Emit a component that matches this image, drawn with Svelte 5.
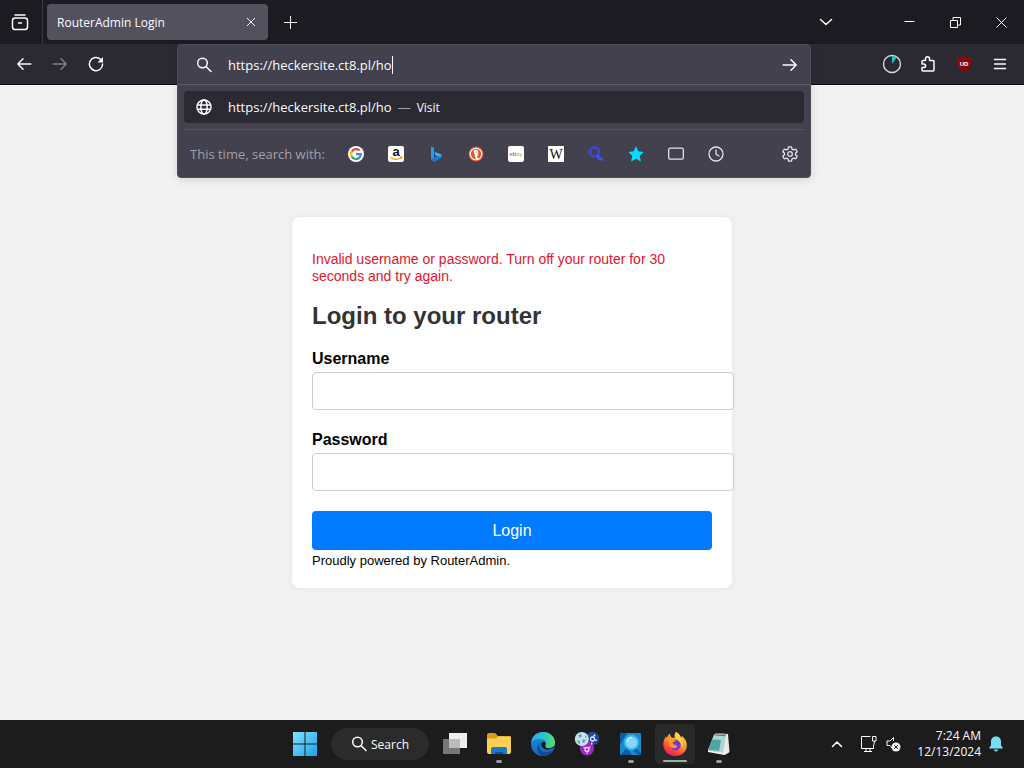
<script>
  let url = $state('https://heckersite.ct8.pl/ho');
  let username = $state('');
  let password = $state('');

  const engines = [
    'Google', 'Amazon', 'Bing', 'DuckDuckGo', 'eBay', 'Wikipedia',
    'Search', 'Bookmarks', 'Tabs', 'History',
  ];

  const apps = [
    { name: 'Task View' },
    { name: 'File Explorer', running: true },
    { name: 'Edge' },
    { name: 'Process Hacker' },
    { name: 'Magnifier', running: true },
    { name: 'Firefox', running: true, active: true },
    { name: 'Notepad', running: true },
  ];
</script>

{#snippet magnifier()}
  <svg class="line" width="16" height="16" viewBox="0 0 16 16" aria-hidden="true">
    <circle cx="6.5" cy="6" r="4.8" />
    <path d="M10.2 9.7 15 14.5" />
  </svg>
{/snippet}

{#snippet arrow()}
  <svg class="line" width="16" height="16" viewBox="0 0 16 16" aria-hidden="true">
    <path d="M1.2 8h13M9 2.8 14.2 8 9 13.2" />
  </svg>
{/snippet}

{#snippet engineIcon(name)}
  <svg width="16" height="16" viewBox="0 0 16 16" aria-hidden="true">
    {#if name === 'Google'}
      <circle cx="8" cy="8" r="8" fill="#fff" />
      <g fill="none" stroke-width="2.2">
        <path d="M3.8 5.6A4.9 4.9 0 0 1 11.6 4.6" stroke="#ea4335" />
        <path d="M3.8 5.4a5 5 0 0 0 0 5.2" stroke="#fbbc05" />
        <path d="M3.7 10.4a4.9 4.9 0 0 0 7.8 1.2" stroke="#34a853" />
        <path d="M8 8.1h4.9a5 5 0 0 1-1.6 3.6" stroke="#4285f4" />
      </g>
    {:else if name === 'Amazon'}
      <rect width="16" height="16" rx="2" fill="#fff" />
      <text x="8" y="10" text-anchor="middle" class="amazon">a</text>
      <path d="M2.5 11.5c3.4 2.4 7.4 2.3 10.6.3M11.8 11.2l2-.1-.7 1.9" fill="none" stroke="#f90" stroke-width="1.3" />
    {:else if name === 'Bing'}
      <path d="M3 .5 6 1.700v10.100L3 13.800z" fill="#2b9bf0" />
      <path d="m3 13.600 3.200-2 3-1.600-1.500-.7L6.400 6l7 2.600v3.100L6 16z" fill="#1b76d8" />
      <path d="m6.400 6 7 2.600v1.800L9.200 10l-1.500-.7z" fill="#35b9f1" />
    {:else if name === 'DuckDuckGo'}
      <circle cx="8" cy="8" r="7.500" fill="#de5833" />
      <circle cx="8" cy="8" r="5.800" fill="none" stroke="#fff" stroke-width="1.100" />
      <path d="M5.500 4.500C8 3 10.500 4.300 10.300 7L9.500 8.500l.8 4.300-2.300.7z" fill="#fff" />
      <circle cx="8.700" cy="6" r=".6" fill="#334e8a" />
      <path d="m8.800 7.600 2.800.3-2.500 1.200z" fill="#fc3" />
      <path d="m8.800 10.300 2.200.4-1.500 1.600z" fill="#4cba3c" />
    {:else if name === 'eBay'}
      <rect width="16" height="16" rx="2" fill="#fff" />
      <text x="8" y="10" text-anchor="middle" class="ebay"><tspan fill="#e53238">e</tspan><tspan fill="#0064d2">b</tspan><tspan fill="#f5af02">a</tspan><tspan fill="#86b817">y</tspan></text>
    {:else if name === 'Wikipedia'}
      <rect width="16" height="16" fill="#fff" />
      <text x="8" y="13" text-anchor="middle" class="wiki">W</text>
    {:else if name === 'Search'}
      <circle cx="6.500" cy="6" r="4.600" fill="none" stroke="#3b45d6" stroke-width="2.600" />
      <path d="m8.500 8.500 6.500 5.500-4.500-.6z" fill="#4250f5" stroke="#4250f5" stroke-width="1.200" />
    {:else if name === 'Bookmarks'}
      <path d="m8 .3 2.400 5 5.400.7-4 3.800 1 5.600L8 12.700l-4.800 2.700 1-5.600L.2 6l5.400-.7z" fill="#00ddff" />
    {:else if name === 'Tabs'}
      <rect x=".7" y="2.200" width="14.600" height="11" rx="1.500" class="line soft" />
    {:else}
      <circle cx="8" cy="8" r="7" class="line soft" />
      <path d="M8 4v4.200l3 1.800" class="line soft" />
    {/if}
  </svg>
{/snippet}

{#snippet appIcon(name)}
  <svg width="26" height="26" viewBox="0 0 26 26" aria-hidden="true">
    {#if name === 'Task View'}
      <rect x="1" y="8" width="17" height="15" fill="#777" />
      <rect x="7" y="2" width="18" height="15" fill="#eee" />
      <path d="M7 8h11v9H7z" fill="#bcbcbc" />
    {:else if name === 'File Explorer'}
      <path d="M1 4a2 2 0 0 1 2-2h6l3 3h11a2 2 0 0 1 2 2v3H1z" fill="#dd9b16" />
      <path d="M1 7.500h9l2-2h13v15.500a2 2 0 0 1-2 2H3a2 2 0 0 1-2-2z" fill="#fcd052" />
      <path d="M5 23v-5a2 2 0 0 1 2-2h12a2 2 0 0 1 2 2v5z" fill="#1779c7" />
      <path d="M9 23v-2h8v2z" fill="#0b5298" />
    {:else if name === 'Edge'}
      <defs>
        <linearGradient id="edgeTop" x1="0" y1="0" x2="1" y2="0">
          <stop offset="0" stop-color="#2aa6e8" />
          <stop offset=".55" stop-color="#2ec4c8" />
          <stop offset="1" stop-color="#5edc65" />
        </linearGradient>
        <linearGradient id="edgeBase" x1="0" y1="0" x2="0" y2="1">
          <stop offset="0" stop-color="#1b91df" />
          <stop offset="1" stop-color="#1468bd" />
        </linearGradient>
      </defs>
      <circle cx="13" cy="13" r="12" fill="url(#edgeBase)" />
      <path d="M1.200 11.500C2 5 7 1 13 1c7 0 12 5 12 10.500 0 4-3 6-6.500 6-3 0-4-1.500-3-3 2-3-1-6.500-5-6.500-4.200 0-7.500 1.500-9.300 3.500z" fill="url(#edgeTop)" />
      <path d="M10.500 10.500c-3 4-.5 10 5 10.500 3 .3 5.500-.5 8-2.200C21 23 17 25 13 25c-6-1-8-9-2.500-14.500z" fill="#0f4c97" />
      <path d="M12.500 11c-1.500 1.300-1.800 4 .5 6 2.500 2.300 7.500 2.200 11-.5l.7-2.500c-1.700 3-5 3.800-7.500 3-1.800-.6-2.500-1.500-1.700-3 .6-1.300 0-2.500-1-3.500z" fill="#1c1c1c" />
    {:else if name === 'Process Hacker'}
      <circle cx="18.500" cy="7.500" r="6.800" fill="#27488c" />
      <circle cx="13" cy="17.500" r="7" fill="#9a2bc0" />
      <circle cx="7.800" cy="8" r="7" fill="#c3e4ee" />
      <path d="m4 4 3-1 1 2-2 2zM9 8l3 1-2 3-2-1zM3 9l3 1v3l-2-1zM11 4l2 2-2 1z" fill="#6c9fb0" />
      <g fill="none" stroke="#d9e9ff" stroke-width="1.300">
        <circle cx="18.500" cy="8" r="2" />
        <circle cx="13" cy="18.500" r="2" stroke="#f7ddff" />
        <path d="m21 3.500-1.500 2M23 9.500l-2-.7M18 11.500l-.5 2" />
        <path d="m9.500 16 1.500 1M16.500 15.500 15 17M13 21v2" stroke="#dba4ee" />
      </g>
    {:else if name === 'Magnifier'}
      <rect x="2" y="2" width="21" height="22" rx="1" fill="#1689cf" />
      <path d="M2 2h7L2 14zM2 24l7-7 5 7z" fill="#0b5d9e" />
      <path d="m18 17 5 5v2h-3l-5-5z" fill="#0a63aa" />
      <circle cx="13.500" cy="11.500" r="6.800" fill="#86d6fa" stroke="#3cb3ec" stroke-width="2" />
      <path d="M9 10.500a5 5 0 0 1 5-4" fill="none" stroke="#c8f0ff" stroke-width="1.500" />
    {:else if name === 'Firefox'}
      <defs>
        <linearGradient id="fox" x1=".8" y1="0" x2=".25" y2="1">
          <stop offset="0" stop-color="#ffe14d" />
          <stop offset=".45" stop-color="#ff9424" />
          <stop offset=".75" stop-color="#ff4538" />
          <stop offset="1" stop-color="#e3196d" />
        </linearGradient>
      </defs>
      <path d="M14 1c3 1.500 4.500 4 5 6 .6-.6.700-1.500.500-2.500C23 7 25 11 24.800 14.500 24.500 21 19.500 25 13 25S1.300 20 1.300 13.500C1.300 10 2.500 7 4.200 5c0 1 .2 1.700.6 2.300C5.500 5 6.500 3.700 8 2.500c0 1.700.5 3 1.800 4l3 .5C12.300 4.500 12.500 2.500 14 1z" fill="url(#fox)" />
      <circle cx="13.300" cy="14" r="5.400" fill="#7139d5" />
      <path d="M4.800 8.300c2-1.500 4.500-1.500 6-.3l3 1c-.3 1.500-2.300 1.700-3 2.500-.3 1 .2 2 2 2.200 2 .3 2.500 1.500 2.200 2-1.500 2.300-6 2-7.500-.7-1-2-.6-4 .3-5z" fill="#ff982b" />
      <path d="M14 1c3 1.500 4.500 4 5 6 2.500 3.500 2.500 7 1 9.500 0-5-4-7-5.500-8.500-2-2-1.800-5-.5-7z" fill="#ffd243" />
    {:else}
      <path d="m9 2 13 1 1.500 18-5 2.500L8 20z" fill="#e8ebe0" />
      <path d="M8 3.500 20 4l-3 18-15-3z" fill="#a9d6d4" />
      <path d="M6.500 8.500 15 9l-2 11-11-1.500z" fill="#4fa5a3" />
      <path d="m2 19 15 3 3-2 3.500 1-5 3L2 21z" fill="#f4f4ee" />
      <path d="m9 2.500 11 .7M9 4l10.500.7" stroke="#5d6f70" />
    {/if}
  </svg>
{/snippet}

<div class="desktop">
  <header class="tabs">
    <button class="view-btn" aria-label="Recent browsing">
      <svg class="line" width="18" height="18" viewBox="0 0 18 18" aria-hidden="true">
        <path d="M4 2h10M7.500 10h3" />
        <rect x="1.500" y="5" width="15" height="11.500" rx="2.500" />
      </svg>
    </button>
    <div class="tab">
      <span>RouterAdmin Login</span>
      <button class="tab-close" aria-label="Close tab">
        <svg class="line thin" width="10" height="10" viewBox="0 0 10 10" aria-hidden="true"><path d="m1 1 8 8M9 1 1 9" /></svg>
      </button>
    </div>
    <button class="icon-btn new-tab" aria-label="New tab">
      <svg class="line thin" width="13" height="13" viewBox="0 0 13 13" aria-hidden="true"><path d="M6.500 0v13M0 6.500h13" /></svg>
    </button>
    <button class="icon-btn all-tabs" aria-label="List all tabs">
      <svg class="line" width="14" height="14" viewBox="0 0 14 14" aria-hidden="true"><path d="m1.500 4.500 5.500 5 5.500-5" /></svg>
    </button>
    <button class="win-btn" aria-label="Minimize">
      <svg class="line thin" width="11" height="11" viewBox="0 0 11 11" aria-hidden="true"><path d="M.5 4.500h10" /></svg>
    </button>
    <button class="win-btn" aria-label="Restore">
      <svg class="line thin" width="11" height="11" viewBox="0 0 11 11" aria-hidden="true"><path d="M.5 3.500h7v7h-7zM3 3.500v-3h7.500V8h-3" /></svg>
    </button>
    <button class="win-btn" aria-label="Close">
      <svg class="line thin" width="11" height="11" viewBox="0 0 11 11" aria-hidden="true"><path d="m.5.5 10 10M10.500.5l-10 10" /></svg>
    </button>
  </header>

  <nav class="toolbar">
    <button class="icon-btn" aria-label="Back"><span class="flip">{@render arrow()}</span></button>
    <button class="icon-btn" aria-label="Forward" disabled>{@render arrow()}</button>
    <button class="icon-btn" aria-label="Reload">
      <svg class="line" width="16" height="16" viewBox="0 0 16 16" aria-hidden="true">
        <path d="M14.600 8A6.600 6.600 0 1 1 12.500 3.200" />
        <path d="M15 1v5.500H9.500z" fill="#fbfbfe" stroke="none" />
      </svg>
    </button>

    <div class="url-slot">
      <div class="urlbar">
        <div class="url-row">
          {@render magnifier()}
          <div class="url-text">
            <input class="url-input" type="text" aria-label="Address" spellcheck="false" bind:value={url} />
            <span class="caret"></span>
          </div>
          <button class="go" aria-label="Go">{@render arrow()}</button>
        </div>
        <a class="result" href={url}>
          <svg class="line" width="16" height="16" viewBox="0 0 16 16" aria-hidden="true">
            <circle cx="8" cy="8" r="7" />
            <ellipse cx="8" cy="8" rx="3.200" ry="7" />
            <path d="M1.500 6h13M1.500 10.200h13" />
          </svg>
          <span class="result-url">{url}</span>
          <span class="dash">—</span>
          <span class="visit">Visit</span>
        </a>
        <div class="one-offs">
          <span class="hint">This time, search with:</span>
          {#each engines as engine}
            <button class="engine" aria-label={engine}>{@render engineIcon(engine)}</button>
          {/each}
          <button class="go settings" aria-label="Search settings">
            <svg class="line soft" width="16" height="16" viewBox="0 0 16 16" aria-hidden="true">
              <path d="M6.500.8h3l.5 2.300 1.500.8 2.300-.7 1.400 2.500L13.500 7.200v1.600l1.700 1.500-1.400 2.500-2.300-.7-1.500.8-.5 2.300h-3L6 12.900l-1.500-.8-2.300.7-1.400-2.500 1.700-1.500V7.200L.8 5.700l1.400-2.500 2.300.7L6 3.100z" />
              <circle cx="8" cy="8" r="2.300" />
            </svg>
          </button>
        </div>
      </div>
    </div>

    <button class="icon-btn" aria-label="Timer">
      <svg width="20" height="20" viewBox="0 0 20 20" aria-hidden="true">
        <circle cx="10" cy="10" r="8.500" fill="none" stroke="#d8d8de" stroke-width="1.400" />
        <path d="M10 10V2a8 8 0 0 1 4.500 1.400z" fill="#20c9b8" />
      </svg>
    </button>
    <button class="icon-btn" aria-label="Extensions">
      <svg class="line" width="16" height="18" viewBox="0 0 16 18" aria-hidden="true">
        <path d="M5.500 5.500V3.700a2 2 0 0 1 4 0v1.800H13q1 0 1 1V15q0 1-1 1H3q-1 0-1-1v-2.500h1.800a1.800 1.800 0 0 0 0-3.600H2V6.500q0-1 1-1z" />
      </svg>
    </button>
    <button class="icon-btn" aria-label="uBlock Origin">
      <svg width="16" height="16" viewBox="0 0 16 16" aria-hidden="true">
        <path d="M8 0c2.500 1.300 4.500 1.700 7 2v5.500c0 4-3 6.500-7 8.500-4-2-7-4.500-7-8.500V2c2.500-.3 4.500-.7 7-2z" fill="#8b0710" />
        <text x="8" y="10" text-anchor="middle" class="shield">UD</text>
      </svg>
    </button>
    <button class="icon-btn" aria-label="Menu">
      <svg class="line" width="14" height="14" viewBox="0 0 14 14" aria-hidden="true"><path d="M1.500 2.500h11M1.500 7h11M1.500 11.500h11" /></svg>
    </button>
  </nav>

  <main class="page">
    <form class="card" onsubmit={(e) => e.preventDefault()}>
      <p class="error">Invalid username or password. Turn off your router for 30 seconds and try again.</p>
      <h2>Login to your router</h2>
      <label for="username">Username</label>
      <input id="username" class="field" type="text" bind:value={username} />
      <label for="password">Password</label>
      <input id="password" class="field" type="password" bind:value={password} />
      <button class="login" type="submit">Login</button>
      <div class="powered">Proudly powered by RouterAdmin.</div>
    </form>
  </main>

  <footer class="taskbar">
    <div class="apps">
      <button class="app" aria-label="Start">
        <svg width="24" height="24" viewBox="0 0 24 24" aria-hidden="true">
          <defs>
            <linearGradient id="start" x1="0" y1="0" x2="1" y2="1">
              <stop offset="0" stop-color="#86e0fb" />
              <stop offset="1" stop-color="#1ba1ea" />
            </linearGradient>
          </defs>
          <path d="M0 0h11.500v11.500H0zM12.500 0H24v11.500H12.500zM0 12.500h11.500V24H0zM12.500 12.500H24V24H12.500z" fill="url(#start)" />
        </svg>
      </button>
      <button class="search">{@render magnifier()}Search</button>
      {#each apps as app}
        <button class="app" class:running={app.running} class:active={app.active} aria-label={app.name}>
          {@render appIcon(app.name)}
        </button>
      {/each}
    </div>
    <div class="tray">
      <button class="tray-btn" aria-label="Show hidden icons">
        <svg class="line" width="12" height="12" viewBox="0 0 12 12" aria-hidden="true"><path d="m1.500 8.500 4.500-4.500 4.500 4.500" /></svg>
      </button>
      <button class="tray-btn status" aria-label="Network and volume">
        <svg class="line thin" width="17" height="18" viewBox="0 0 17 18" aria-hidden="true">
          <path d="M10.500 1.500h-9v12h12V9.500M4 16.500h8M6 13.500v3M10 13.500v3M12.500 1.500h3.500v4.500h-3.500zM14.200 6v3.500" />
        </svg>
        <svg class="line thin" width="17" height="18" viewBox="0 0 17 18" aria-hidden="true">
          <path d="M8.500 6V2.500L5 6H2v4.500h3L7 13" />
          <circle cx="11" cy="12" r="4.500" fill="#f4f4f4" stroke="none" />
          <path class="mute" d="m9.200 10.200 3.600 3.600M12.800 10.200 9.200 13.800" />
        </svg>
      </button>
      <div class="clock">
        <time datetime="07:24">7:24 AM</time>
        <time datetime="2024-12-13">12/13/2024</time>
      </div>
      <button class="tray-btn" aria-label="Notifications">
        <svg width="14" height="16" viewBox="0 0 14 16" aria-hidden="true">
          <path d="M7 .5c3 0 5 2 5 5v3.800l1.700 2.500v.7H.3v-.7L2 9.300V5.500c0-3 2-5 5-5zM5 13.500h4a2 2 0 0 1-4 0z" fill="#76e0f2" />
        </svg>
      </button>
    </div>
  </footer>
</div>

<style>
  :global(body) {
    margin: 0;
    background: #f2f2f2;
  }

  .desktop {
    display: flex;
    flex-direction: column;
    min-height: 100vh;
    font-family: "Open Sans", "Noto Sans", sans-serif;
    font-size: 12px;
    color: #fbfbfe;
  }

  button {
    display: flex;
    align-items: center;
    justify-content: center;
    padding: 0;
    border: none;
    background: none;
    color: inherit;
    font: inherit;
    cursor: pointer;
  }

  svg {
    display: block;
    flex: none;
    overflow: visible;
  }

  .line {
    fill: none;
    stroke: #fbfbfe;
    stroke-width: 1.5;
    stroke-linecap: round;
    stroke-linejoin: round;
  }

  .line.soft {
    stroke: #e4e3ea;
    stroke-width: 1.3;
  }

  .line.thin {
    stroke-width: 1;
    stroke-linecap: butt;
    stroke-linejoin: miter;
  }

  .mute {
    stroke: #1c1c1c;
  }

  /* tab strip */
  .tabs {
    display: flex;
    align-items: center;
    height: 44px;
    background: #1c1b22;
  }

  .view-btn {
    width: 43px;
    height: 44px;
    padding-right: 3px;
    border-right: 1px solid #3a3942;
    box-sizing: border-box;
  }

  .tab {
    display: flex;
    align-items: center;
    justify-content: space-between;
    box-sizing: border-box;
    width: 221px;
    height: 36px;
    margin-left: 4px;
    padding: 0 6px 0 10px;
    border-radius: 4px;
    background: #53515e;
  }

  .tab-close {
    width: 22px;
    height: 24px;
  }

  .icon-btn {
    width: 36px;
    height: 36px;
  }

  .icon-btn:disabled {
    opacity: 0.4;
  }

  .new-tab {
    margin-left: 4px;
  }

  .all-tabs {
    margin: 0 42px 0 auto;
  }

  .win-btn {
    width: 46px;
    height: 44px;
  }

  /* navigation toolbar */
  .toolbar {
    display: flex;
    align-items: center;
    height: 40px;
    padding: 0 6px;
    background: #2b2a33;
    border-bottom: 1px solid #0c0c0d;
  }

  .flip {
    transform: scaleX(-1);
  }

  .url-slot {
    position: relative;
    flex: 1;
    align-self: stretch;
    margin: 0 63px;
  }

  .urlbar {
    position: absolute;
    top: 0;
    left: 0;
    right: 0;
    z-index: 1;
    border: 1px solid #4d4c58;
    border-radius: 4px;
    background: #42414d;
    box-shadow: 0 2px 10px rgba(0, 0, 0, 0.12);
    box-sizing: border-box;
    font-size: 13px;
  }

  .url-row {
    display: flex;
    align-items: center;
    gap: 16px;
    height: 39px;
    padding: 0 12px 0 18px;
    border-bottom: 1px solid #5b5a66;
  }

  .url-text {
    display: flex;
    align-items: center;
    flex: 1;
  }

  .url-input {
    field-sizing: content;
    padding: 0;
    border: none;
    outline: none;
    background: none;
    color: #fbfbfe;
    font: inherit;
  }

  .caret {
    width: 1px;
    height: 18px;
    background: #fbfbfe;
  }

  .go {
    width: 16px;
    height: 24px;
  }

  .result {
    display: flex;
    align-items: center;
    height: 32px;
    margin: 6px;
    padding: 0 12px;
    border-radius: 4px;
    background: #2b2a33;
    color: inherit;
    text-decoration: none;
  }

  .result-url {
    margin-left: 16px;
  }

  .dash {
    margin: 0 6px;
    color: #a5a4ae;
  }

  .visit {
    font-size: 12px;
  }

  .one-offs {
    display: flex;
    align-items: center;
    height: 47px;
    margin: 0 6px;
    padding: 0 6px;
    border-top: 1px solid #53525e;
  }

  .hint {
    width: 146px;
    color: #a09fa9;
    white-space: nowrap;
  }

  .engine {
    width: 40px;
    height: 32px;
  }

  .settings {
    margin-left: auto;
  }

  .amazon {
    font: bold 13px/13px "Liberation Sans", sans-serif;
    fill: #111;
  }

  .ebay {
    font: 6px "Liberation Sans", sans-serif;
  }

  .wiki {
    font: 14px "Liberation Serif", serif;
    fill: #111;
  }

  .shield {
    font: bold 6px "Liberation Sans", sans-serif;
    fill: #fff;
  }

  /* login page */
  .page {
    display: flex;
    flex: 1;
    align-items: center;
    justify-content: center;
    background: #f2f2f2;
    color: #000;
    font-family: Arial, "Liberation Sans", sans-serif;
  }

  .card {
    width: 400px;
    padding: 20px;
    border-radius: 8px;
    background: #fff;
    box-shadow: 0 0 10px rgba(0, 0, 0, 0.06);
  }

  .error {
    margin: 14px 0;
    color: #e0142c;
    font-size: 14px;
    line-height: 17px;
  }

  h2 {
    margin: 16px 0 18px;
    color: #333;
    font-size: 24px;
    line-height: 30px;
  }

  label {
    display: block;
    margin-bottom: 3px;
    font-size: 16px;
    font-weight: bold;
    line-height: 20px;
  }

  .field {
    display: block;
    width: 100%;
    height: 16px;
    margin-bottom: 20px;
    padding: 10px;
    border: 1px solid #ccc;
    border-radius: 4px;
    background: #fff;
    font-size: 13px;
  }

  .login {
    width: 100%;
    height: 39px;
    border-radius: 4px;
    background: #007bff;
    color: #fff;
    font-size: 16px;
  }

  .powered {
    padding-top: 3px;
    font-size: 13px;
    line-height: 15px;
  }

  /* taskbar */
  .taskbar {
    display: grid;
    grid-template-columns: 1fr auto 1fr;
    align-items: center;
    height: 48px;
    background: #1c1c1c;
  }

  .apps {
    display: flex;
    grid-column: 2;
  }

  .app {
    position: relative;
    width: 44px;
    height: 48px;
  }

  .app.active {
    width: 40px;
    height: 40px;
    margin: 4px 2px;
    border-radius: 4px;
    background: #292929;
  }

  .app.running::after {
    content: "";
    position: absolute;
    bottom: 5px;
    left: 50%;
    width: 6px;
    height: 3px;
    border-radius: 2px;
    background: #9a9a9a;
    transform: translateX(-50%);
  }

  .app.active::after {
    bottom: 2px;
    width: 24px;
    height: 2px;
    background: #8fb5b0;
  }

  .search {
    gap: 4px;
    width: 98px;
    height: 32px;
    margin: 8px 4px;
    border-radius: 16px;
    background: #2b2b2b;
  }

  .tray {
    display: flex;
    align-items: center;
    justify-content: flex-end;
    padding-right: 18px;
  }

  .tray-btn {
    min-width: 20px;
    height: 32px;
  }

  .status {
    gap: 8px;
    margin: 0 15px 0 13px;
  }

  .clock {
    display: flex;
    flex-direction: column;
    align-items: flex-end;
    margin-right: 5px;
    font-size: 12px;
    line-height: 16px;
  }
</style>
